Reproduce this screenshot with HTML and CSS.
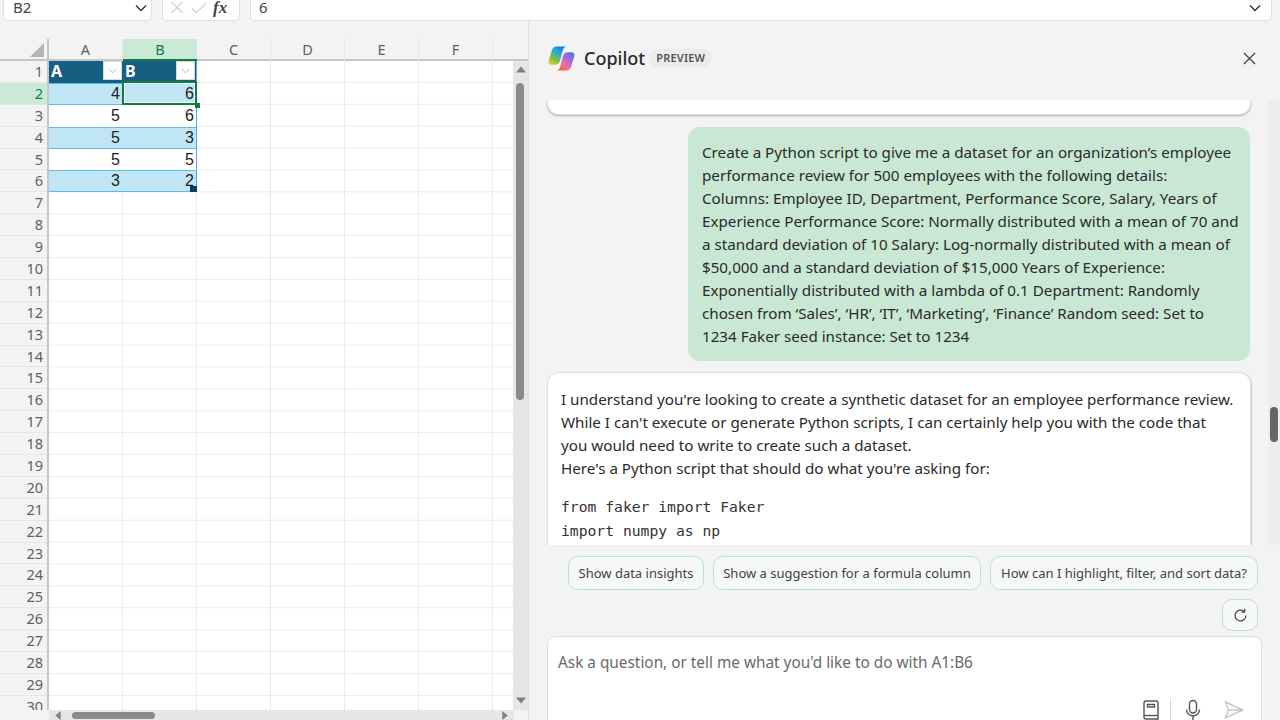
FILE: index.html
```html
<!DOCTYPE html>
<html lang="en">
<head>
<meta charset="utf-8">
<title>Excel Copilot</title>
<link rel="stylesheet" href="styles.css">
</head>
<body>
<div class="topbar">
  <div class="namebox"><span>B2</span><svg class="chev" viewBox="0 0 12 8"><path d="M1 1.500 6 6.500 11 1.500"/></svg></div>
  <div class="fxbox">
    <svg class="fxicon" viewBox="0 0 16 16"><path d="M2 2 14 14M14 2 2 14"/></svg>
    <svg class="fxicon" viewBox="0 0 18 16"><path d="M1 9 6 14 17 3"/></svg>
    <span class="fx">fx</span>
  </div>
  <div class="formula"><span>6</span><svg class="chev" viewBox="0 0 12 8"><path d="M1 1.500 6 6.500 11 1.500"/></svg></div>
</div>
<div class="main">
  <section class="sheet">
    <div class="colhead">
      <div class="corner"><svg viewBox="0 0 16 16"><path d="M16 1V16H1Z"/></svg></div>
      <div class="col">A</div><div class="col sel">B</div><div class="col">C</div><div class="col">D</div><div class="col">E</div><div class="col">F</div><div class="col last"></div>
    </div>
    <div class="sheetbody">
      <div class="rowheads">
        <div>1</div><div class="sel">2</div><div>3</div><div>4</div><div>5</div><div>6</div><div>7</div><div>8</div><div>9</div><div>10</div>
        <div>11</div><div>12</div><div>13</div><div>14</div><div>15</div><div>16</div><div>17</div><div>18</div><div>19</div><div>20</div>
        <div>21</div><div>22</div><div>23</div><div>24</div><div>25</div><div>26</div><div>27</div><div>28</div><div>29</div><div>30</div>
      </div>
      <div class="cells">
        <div class="tbl">
          <div class="tr head">
            <div class="td"><b>A</b><i class="filter"><svg viewBox="0 0 10 6"><path d="M1 1 5 5 9 1"/></svg></i></div>
            <div class="td"><b>B</b><i class="filter"><svg viewBox="0 0 10 6"><path d="M1 1 5 5 9 1"/></svg></i></div>
          </div>
          <div class="tr band"><div class="td">4</div><div class="td">6</div></div>
          <div class="tr"><div class="td">5</div><div class="td">6</div></div>
          <div class="tr band"><div class="td">5</div><div class="td">3</div></div>
          <div class="tr"><div class="td">5</div><div class="td">5</div></div>
          <div class="tr band"><div class="td">3</div><div class="td">2</div></div>
          <span class="active"></span><span class="handle"></span><span class="resize"></span>
        </div>
      </div>
      <div class="vscroll">
        <svg class="arrow" viewBox="0 0 10 6"><path d="M5 0 10 6H0Z"/></svg>
        <div class="vtrack"><div class="vthumb"></div></div>
        <svg class="arrow" viewBox="0 0 10 6"><path d="M0 0H10L5 6Z"/></svg>
      </div>
    </div>
    <div class="hscroll">
      <svg class="harrow" viewBox="0 0 6 10"><path d="M6 0V10L0 5Z"/></svg>
      <div class="hthumb"></div>
      <svg class="harrow end" viewBox="0 0 6 10"><path d="M0 0V10L6 5Z"/></svg>
    </div>
  </section>

  <section class="copilot">
    <header class="cohead">
      <svg class="logo" viewBox="0 0 28 28">
        <defs>
          <linearGradient id="g1" x1="0.1" y1="1" x2="0.7" y2="0"><stop offset="0" stop-color="#f6c62c"/><stop offset=".35" stop-color="#6cc24a"/><stop offset=".7" stop-color="#22a6e6"/><stop offset="1" stop-color="#1f6fd8"/></linearGradient>
          <linearGradient id="g2" x1="0.9" y1="0" x2="0.25" y2="1"><stop offset="0" stop-color="#3f7fe6"/><stop offset=".35" stop-color="#a863dc"/><stop offset=".7" stop-color="#ef6f9e"/><stop offset="1" stop-color="#f6602a"/></linearGradient>
        </defs>
        <path fill="url(#g1)" d="M9 1.500H20C17 1.500 15.800 3.500 15 6.500L12.700 15.500C11.800 19 10 20.500 7 20.500H3.500C1.200 20.500 0 18.800 .8 16L4 5.500C4.800 3 6.500 1.500 9 1.500Z"/>
        <path fill="url(#g2)" d="M19 26.500H8C11 26.500 12.200 24.500 13 21.500L15.300 12.500C16.200 9 18 7.500 21 7.500H24.500C26.800 7.500 28 9.200 27.200 12L24 22.500C23.200 25 21.500 26.500 19 26.500Z"/>
      </svg>
      <span class="coname">Copilot</span>
      <span class="preview">PREVIEW</span>
      <svg class="close" viewBox="0 0 14 14"><path d="M1 1 13 13M13 1 1 13"/></svg>
    </header>
    <div class="chatwrap">
      <div class="chat">
        <div class="prevcard"></div>
        <div class="bubble">Create a Python script to give me a dataset for an organization’s employee<br>performance review for 500 employees with the following details:<br>Columns: Employee ID, Department, Performance Score, Salary, Years of<br>Experience Performance Score: Normally distributed with a mean of 70 and<br>a standard deviation of 10 Salary: Log-normally distributed with a mean of<br>$50,000 and a standard deviation of $15,000 Years of Experience:<br>Exponentially distributed with a lambda of 0.1 Department: Randomly<br>chosen from ‘Sales’, ‘HR’, ‘IT’, ‘Marketing’, ‘Finance’ Random seed: Set to<br>1234 Faker seed instance: Set to 1234</div>
        <div class="answer">
          <p>I understand you're looking to create a synthetic dataset for an employee performance review.<br>While I can't execute or generate Python scripts, I can certainly help you with the code that<br>you would need to write to create such a dataset.<br>Here's a Python script that should do what you're asking for:</p>
          <pre>from faker import Faker
import numpy as np
import pandas as pd</pre>
        </div>
      </div>
      <div class="chatscroll"><div class="chatthumb"></div></div>
    </div>
    <div class="suggest">
      <button class="pill">Show data insights</button>
      <button class="pill">Show a suggestion for a formula column</button>
      <button class="pill">How can I highlight, filter, and sort data?</button>
    </div>
    <div class="refreshrow">
      <button class="refresh"><svg viewBox="0 0 16 16"><path d="M13.800 8a5.800 5.800 0 1 1-1.800-4.200"/><path d="M12.500 .8v3.500H9"/></svg></button>
    </div>
    <div class="inputbox">
      <div class="placeholder">Ask a question, or tell me what you'd like to do with A1:B6</div>
      <div class="tools">
        <svg class="tool" viewBox="0 0 20 22"><path d="M5 2h10a2 2 0 0 1 2 2v16H5a2 2 0 0 1-2-2V4a2 2 0 0 1 2-2Z"/><path d="M3 16.500h14"/><path d="M6.500 5.500h7v2.500h-7Z"/></svg>
        <span class="sep"></span>
        <svg class="tool" viewBox="0 0 20 22"><rect x="6.500" y="1.500" width="7" height="12.500" rx="3.500"/><path d="M3.500 10.500a6.500 6.500 0 0 0 13 0M10 17v4"/></svg>
        <svg class="tool send" viewBox="0 0 20 20"><path d="M1.500 2 19 10 1.500 18 4.500 10ZM4.500 10H19"/></svg>
      </div>
    </div>
  </section>
</div>
</body>
</html>
```
FILE: styles.css
```css
* { box-sizing: border-box; }
html, body { margin: 0; height: 720px; overflow: hidden; }
body { background: #f3f3f3; font-family: "Noto Sans", "Open Sans", sans-serif; color: #242424; position: relative; }
.topbar { height: 21px; display: flex; gap: 10px; padding-left: 3px; padding-right: 8px; }
.namebox, .fxbox, .formula { height: 21px; background: #fff; border: 1px solid #e0e0e0; border-top: 0; border-radius: 0 0 5px 5px; display: flex; align-items: center; font-size: 15px; line-height: 15px; color: #444; padding-bottom: 5px; }
.namebox { width: 149px; padding-left: 9px; padding-right: 4px; justify-content: space-between; }
.fxbox { width: 78px; padding-left: 6px; padding-right: 4px; gap: 6px; }
.formula { flex: 1; padding-left: 8px; padding-right: 10px; justify-content: space-between; }
.chev { width: 12px; height: 8px; fill: none; stroke: #333; stroke-width: 1.400; }
.fxicon { width: 16px; height: 15px; fill: none; stroke: #c8c8c8; stroke-width: 1.200; }
.fx { font-family: "Liberation Serif", serif; font-style: italic; font-size: 17px; line-height: 15px; color: #444; font-weight: 700; }
.main { display: flex; height: 699px; }
.sheet { width: 529px; flex: none; border-right: 1px solid #dedede; display: flex; flex-direction: column; overflow: hidden; }
.colhead { display: flex; height: 40px; padding-top: 18px; flex: none; font-size: 14.500px; color: #5f5f5f; border-bottom: 2px solid #c6c6c6; }
.corner { width: 49px; height: 20px; flex: none; border-right: 2px solid #c6c6c6; display: flex; justify-content: flex-end; align-items: flex-end; padding: 0 3px 2px 0; }
.corner svg { width: 15px; height: 15px; fill: #b4b4b4; }
.col { width: 74px; height: 22px; flex: none; text-align: center; line-height: 21px; border-right: 1px solid #e6e6e6; }
.col.sel { background: #cae9d6; color: #107c41; border-right: 0; border-bottom: 2px solid #107c41; }
.col.last { width: 20px; border: 0; }
.sheetbody { flex: 1; min-height: 0; display: flex; overflow: hidden; }
.rowheads { width: 49px; flex: none; height: 650px; overflow: hidden; border-right: 2px solid #c6c6c6; font-size: 14.500px; color: #5f5f5f; }
.rowheads div { height: 21.900px; line-height: 21px; text-align: right; padding-right: 4px; border-bottom: 1px solid #e6e6e6; }
.rowheads .sel { background: #cae9d6; color: #107c41; box-shadow: inset -2px 0 0 #107c41; margin-right: -2px; padding-right: 6px; }
.cells { flex: 1; background-color: #fff;
  background-image: linear-gradient(#ebebeb 1px, transparent 1px), linear-gradient(90deg, #ebebeb 1px, transparent 1px);
  background-size: 74px 21.900px; background-position: 0 -1px, -1px 0; position: relative; }
.tbl { width: 148px; position: relative; }
.tr { display: flex; height: 21.900px; }
.td { width: 74px; text-align: right; font: 16px/22px "Liberation Sans", sans-serif; color: #222; padding-right: 2px; background: #fff; }
.tr .td:first-child { padding-right: 3px; }
.tr .td:last-child { border-right: 1px solid #4aaee0; }
.tr.band .td { background: #c0e6f5; border-top: 1px solid #62b8e6; border-bottom: 1px solid #62b8e6; line-height: 20px; }
.tr.head .td { background: #156082; color: #fff; display: flex; justify-content: space-between; align-items: center; padding: 0 1px 2px 2px; }
.tr.head b { font: 700 16px "Noto Sans", sans-serif; }
.filter { width: 19px; height: 19px; background: #fff; border: 1px solid #d8d8d8; display: flex; align-items: center; justify-content: center; }
.filter svg { width: 9px; height: 6px; fill: none; stroke: #aaa; stroke-width: 1; }
.active { position: absolute; left: 73px; top: 20px; width: 75px; height: 24px; border: 2px solid #107c41; box-shadow: inset 0 0 0 1px #fff; }
.handle { position: absolute; left: 146px; top: 42px; width: 5px; height: 5px; background: #107c41; }
.resize { position: absolute; left: 141px; top: 125px; width: 7px; height: 6px; background: #0e3a66; }
.vscroll { width: 15px; flex: none; background: #e6e6e6; height: 650px; display: flex; flex-direction: column; align-items: center; padding: 5px 0 7px; }
.arrow { width: 10px; height: 7px; fill: #808080; flex: none; }
.vtrack { flex: 1; width: 100%; padding: 10px 3px 6px; }
.vthumb { height: 317px; width: 8px; background: #8a8a8a; border-radius: 4px; }
.hscroll { height: 10px; flex: none; margin-left: 49px; width: 465px; background: #e6e6e6; display: flex; align-items: center; padding: 0 6px; gap: 11px; }
.harrow { width: 6px; height: 9px; fill: #808080; flex: none; }
.harrow.end { margin-left: auto; }
.hthumb { width: 83px; height: 7px; background: #8a8a8a; border-radius: 4px; }
.copilot { flex: 1; min-width: 0; display: flex; flex-direction: column; font-size: 15.200px; position: relative; }
.cohead { height: 79px; flex: none; display: flex; align-items: center; padding: 0 24px 5px 18px; }
.logo { width: 27px; height: 27px; flex: none; margin-left: 1px; }
.coname { font-size: 18px; font-weight: 500; margin-left: 9px; color: #2b2b2b; }
.preview { margin-left: 4px; background: #ebebeb; border-radius: 9px; font-size: 11px; font-weight: 600; padding: 0 7px; line-height: 18px; color: #555; letter-spacing: .2px; }
.close { width: 13px; height: 13px; margin-left: auto; fill: none; stroke: #444; stroke-width: 1.400; }
.chatwrap { height: 445px; flex: none; display: flex; position: relative; }
.chat { width: 739px; flex: none; overflow: hidden; height: 445px; padding: 0 0 0 18px; }
.prevcard { width: 704px; height: 15px; background: #fff; border-radius: 0 0 12px 12px; border: 1px solid #e2e2e2; border-top: 0; box-shadow: 0 1px 2px rgba(0,0,0,.3); }
.bubble { margin: 12px 0 0 141px; width: 562px; height: 234px; background: #c8e8d4; border-radius: 12px; padding: 14px 10px 0 14px; line-height: 23px; white-space: nowrap; color: #2a2a2a; }
.answer { margin-top: 11px; width: 704px; background: #fff; border-radius: 12px; border: 1px solid #e0e0e0; box-shadow: 1px 1px 2px rgba(0,0,0,.15); padding: 15px 14px 20px 13px; line-height: 23px; white-space: nowrap; color: #2a2a2a; }
.answer p { margin: 0; }
.answer pre { margin: 15px 0 0; font: 14.700px/24px "DejaVu Sans Mono", monospace; color: #333; }
.chatscroll { width: 12px; margin-left: auto; background: #eeeeee; padding-top: 307px; }
.chatthumb { width: 8px; height: 35px; margin-left: 2px; background: #666; border-radius: 4px; }
.suggest { display: flex; justify-content: flex-end; gap: 9px; padding: 11px 22px 0 0; flex: none; }
.pill, .refresh { background: #f6f8f7; border: 1.500px solid #b8e4cd; border-radius: 10px; height: 34px; padding: 0; font: 13px "Noto Sans", sans-serif; color: #424242; }
.pill:nth-child(1) { width: 136px; }
.pill:nth-child(2) { width: 268px; }
.pill:nth-child(3) { width: 268px; }
.refreshrow { display: flex; justify-content: flex-end; padding: 9px 22px 0 0; flex: none; }
.refresh { width: 36px; height: 32px; display: flex; align-items: center; justify-content: center; }
.refresh svg { width: 15px; height: 15px; fill: none; stroke: #444; stroke-width: 1.300; }
.inputbox { margin: 5px 18px 0; height: 100px; width: 715px; background: #fff; border: 1px solid #dedede; border-radius: 8px 8px 0 0; padding: 14px 10px; flex: none; color: #6a6a6a; font-size: 15.350px; position: relative; }
.placeholder { line-height: 22px; }
.tools { display: flex; align-items: center; justify-content: flex-end; margin-top: 26px; padding-right: 7px; gap: 14px; }
.tool { width: 20px; height: 22px; fill: none; stroke: #555; stroke-width: 1.400; flex: none; }
.send { stroke: #c4c4c4; margin-left: 7px; }
.sep { width: 1px; height: 22px; background: #d8d8d8; margin: 0 -2px 0 -5px; }
```
